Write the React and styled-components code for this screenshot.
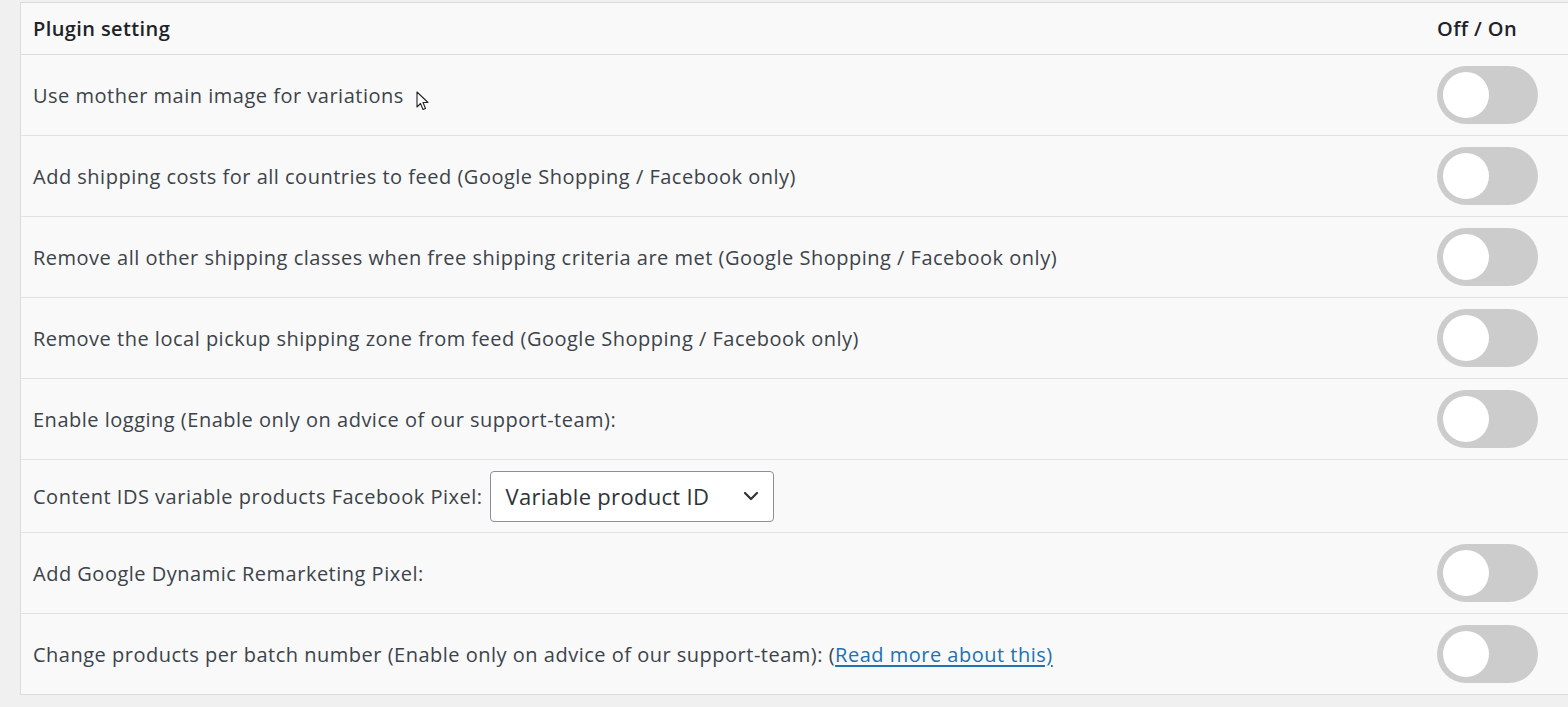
import React, { useState } from 'react';
import styled, { createGlobalStyle } from 'styled-components';

const GlobalStyle = createGlobalStyle`
  html, body {
    margin: 0;
    padding: 0;
    background: #f0f0f1;
    font-family: 'Open Sans', 'Noto Sans', sans-serif;
    overflow: hidden;
  }
`;

const Page = styled.div`
  padding: 2px 0 0 20px;
  height: 705px;
`;

const Table = styled.div`
  background: #f9f9f9;
  border: 1px solid #dcdcde;
  border-right: none;
  display: flex;
  flex-direction: column;
`;

const HeaderRow = styled.div`
  display: flex;
  align-items: center;
  height: 51px;
  border-bottom: 1px solid #dcdcde;
`;

const Row = styled.div`
  display: flex;
  align-items: center;
  height: ${props => props.$height || 80}px;
  border-bottom: ${props => props.$last ? 'none' : '1px solid #e2e2e4'};
`;

const HeadCell = styled.div`
  flex: 1;
  padding-left: 12px;
  font-size: 20px;
  font-weight: 600;
  color: #1d2327;
  letter-spacing: 0.4px;
`;

const ToggleHead = styled(HeadCell)`
  flex: 0 0 131px;
  padding-left: 0;
`;

const Label = styled.div`
  flex: 1;
  display: flex;
  align-items: center;
  padding-left: 12px;
  font-size: 20px;
  color: #3c434a;
  letter-spacing: 0.5px;
  white-space: nowrap;
`;

const ToggleCell = styled.div`
  flex: 0 0 131px;
  display: flex;
  align-items: center;
`;

const Switch = styled.button`
  position: relative;
  width: 101px;
  height: 58px;
  border: none;
  border-radius: 29px;
  background: ${props => props.$on ? '#2271b1' : '#cccccc'};
  padding: 0;
  cursor: pointer;
`;

const Knob = styled.span`
  position: absolute;
  top: 6px;
  left: ${props => props.$on ? '49px' : '6px'};
  width: 46px;
  height: 46px;
  border-radius: 50%;
  background: #ffffff;
`;

const Select = styled.div`
  display: flex;
  align-items: center;
  justify-content: space-between;
  width: 284px;
  height: 51px;
  box-sizing: border-box;
  margin-left: 8px;
  padding: 0 12px 0 14px;
  border: 1px solid #8c8f94;
  border-radius: 4px;
  background: #ffffff;
  font-size: 22px;
  color: #2c3338;
  letter-spacing: 0.3px;
`;

const Link = styled.a`
  color: #2271b1;
  text-decoration: underline;
  text-underline-offset: 3px;
`;

const Cursor = styled.svg`
  margin-left: 12px;
  margin-top: 12px;
`;

const settings = [
  { label: 'Use mother main image for variations', cursor: true },
  { label: 'Add shipping costs for all countries to feed (Google Shopping / Facebook only)' },
  { label: 'Remove all other shipping classes when free shipping criteria are met (Google Shopping / Facebook only)' },
  { label: 'Remove the local pickup shipping zone from feed (Google Shopping / Facebook only)' },
  { label: 'Enable logging (Enable only on advice of our support-team):' },
  { label: 'Content IDS variable products Facebook Pixel:', select: true },
  { label: 'Add Google Dynamic Remarketing Pixel:' },
  { label: 'Change products per batch number (Enable only on advice of our support-team):', link: true },
];

const Toggle = ({ on, onClick }) => (
  <Switch $on={on} onClick={onClick}>
    <Knob $on={on} />
  </Switch>
);

const App = () => {
  const [state, setState] = useState(settings.map(() => false));

  const flip = (i) => {
    const next = [...state];
    next[i] = !next[i];
    setState(next);
  };

  return (
    <>
      <GlobalStyle />
      <Page>
        <Table>
          <HeaderRow>
            <HeadCell>Plugin setting</HeadCell>
            <ToggleHead>Off / On</ToggleHead>
          </HeaderRow>
          {settings.map((s, i) => (
            <Row key={i} $height={s.select ? 72 : 80} $last={i === settings.length - 1}>
              <Label>
                {s.label}
                {s.link && (
                  <>&nbsp;(<Link href="#">Read more about this)</Link></>
                )}
                {s.select && (
                  <Select>
                    Variable product ID
                    <svg width="20" height="20" viewBox="0 0 20 20" fill="none" stroke="#2c3338" strokeWidth="2.2" strokeLinecap="round" strokeLinejoin="round">
                      <path d="M4 7l6 6 6-6" />
                    </svg>
                  </Select>
                )}
                {s.cursor && (
                  <Cursor width="13" height="20" viewBox="0 0 13 20">
                    <path d="M1 1v15l3.5-3.5 2.5 6 2.5-1-2.5-6h5z" fill="#fff" stroke="#222" strokeWidth="1.1" strokeLinejoin="round" />
                  </Cursor>
                )}
              </Label>
              <ToggleCell>
                {!s.select && <Toggle on={state[i]} onClick={() => flip(i)} />}
              </ToggleCell>
            </Row>
          ))}
        </Table>
      </Page>
    </>
  );
};

export default App;
